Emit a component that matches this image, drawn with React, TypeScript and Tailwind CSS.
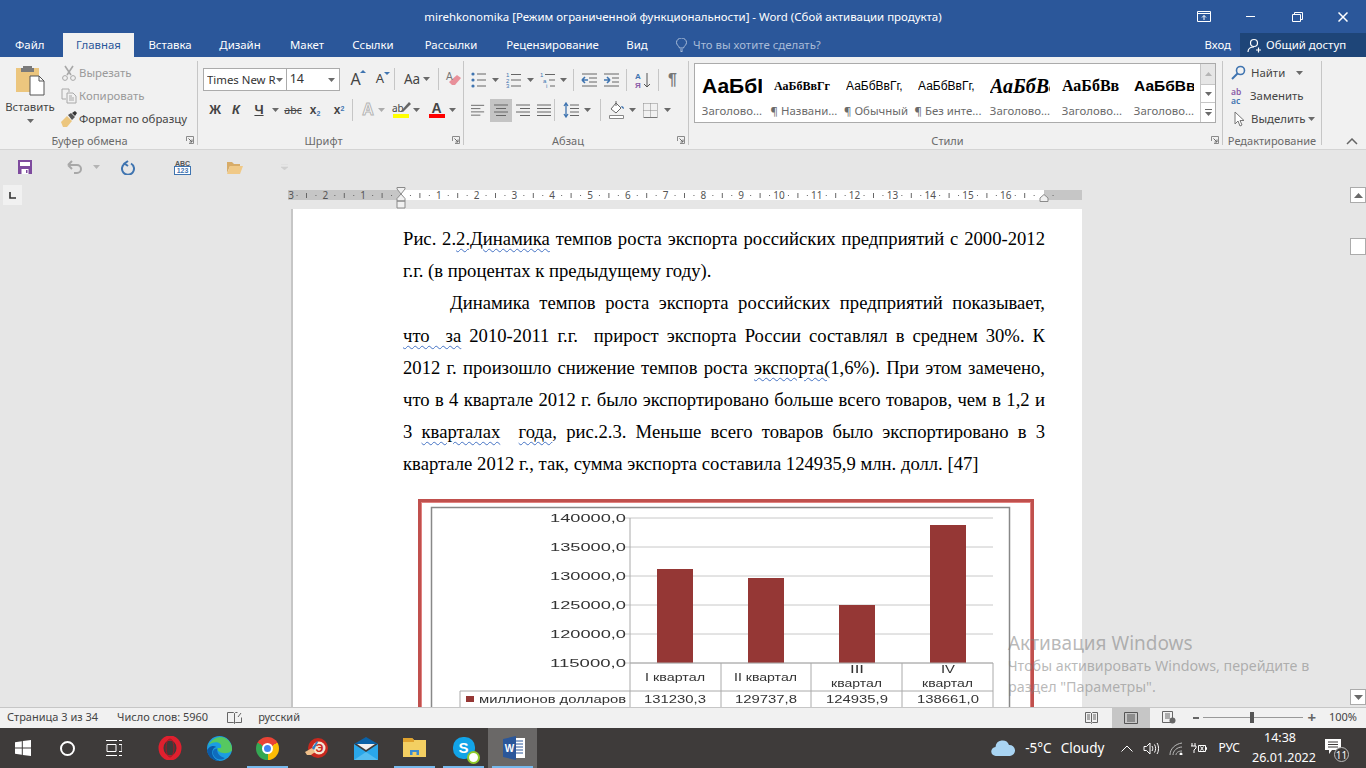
import React from "react";

const UI = "font-['Noto_Sans',sans-serif]";

function Caret({ className = "" }: { className?: string }) {
  return (
    <svg width="7" height="4" viewBox="0 0 7 4" className={`shrink-0 ${className}`}>
      <path d="M0 0h7L3.5 4z" fill="#6a6a6a" />
    </svg>
  );
}

function Launcher() {
  return (
    <svg width="8" height="8" viewBox="0 0 8 8" className="absolute bottom-[1px] right-[3px]">
      <path d="M.5 5V.5H7.5V7.5H3" fill="none" stroke="#8a8a8a" />
      <path d="M2.5 2.5L6 6M6 3.5V6H3.5" fill="none" stroke="#6a6a6a" />
    </svg>
  );
}

function Group({ w, label, pad = "", children }: { w: string; label: string; pad?: string; children: React.ReactNode }) {
  return (
    <div className={`relative flex h-[84px] shrink-0 flex-col border-r border-[#c6c6c6] ${w}`}>
      <div className="h-[72px] shrink-0">{children}</div>
      <div className={`whitespace-nowrap text-center text-[11px] leading-[16px] text-[#6a6a6a] ${pad}`}>{label}</div>
    </div>
  );
}

function Lines({ rows, stroke = "#666" }: { rows: string[]; stroke?: string }) {
  return (
    <svg width="16" height="14" viewBox="0 0 16 14">
      {rows.map((d, i) => (
        <path key={i} d={d} stroke={stroke} fill="none" />
      ))}
    </svg>
  );
}

function VSep() {
  return <div className="h-[22px] w-px shrink-0 bg-[#c6c6c6]" />;
}

function ClipboardGroup() {
  return (
    <Group w="w-[198px]" label="Буфер обмена" pad="pr-[18px]">
      <div className="flex">
        <div className="flex w-[60px] flex-col items-center pt-[4px]">
          <svg width="30" height="31" viewBox="0 0 30 31">
            <path d="M1 3h23v24H1z" fill="#ecc67e" />
            <path d="M8 3h9v-2h-9zM6 3h13v4H6z" fill="#7a7a7a" />
            <path d="M15 11h9l5 5v14H15z" fill="#fff" stroke="#555" />
            <path d="M24 11v5h5" fill="none" stroke="#555" />
          </svg>
          <div className="mt-[3px] text-[11.4px] leading-[16px] text-[#444]">Вставить</div>
          <Caret className="mt-[4px]" />
        </div>
        <div className="flex flex-col text-[11.4px] leading-[23px]">
          <div className="flex h-[23px] items-center gap-[2px] text-[#9a9a9a]">
            <svg width="16" height="16" viewBox="0 0 16 16" className="ml-px">
              <path d="M4 1l6 9M12 1L6 10" stroke="#a8a8a8" strokeWidth="1.6" fill="none" />
              <circle cx="4" cy="13" r="2.4" fill="none" stroke="#a8a8a8" />
              <circle cx="12" cy="13" r="2.4" fill="none" stroke="#a8a8a8" />
            </svg>
            Вырезать
          </div>
          <div className="flex h-[23px] items-center gap-[2px] text-[#9a9a9a]">
            <svg width="16" height="16" viewBox="0 0 16 16" className="ml-px">
              <path d="M1 1h7v3M1 1v10h4" fill="none" stroke="#a8a8a8" />
              <path d="M6 5h6l3 3v7H6z" fill="none" stroke="#a8a8a8" />
              <path d="M8 8h3M8 10h5M8 12h5" stroke="#a8a8a8" />
            </svg>
            Копировать
          </div>
          <div className="flex h-[23px] items-center gap-[2px] text-[#444]">
            <svg width="16" height="16" viewBox="0 0 16 16" className="ml-px">
              <path d="M0 11l6-6 5 5-5 6H2z" fill="#ecc67e" />
              <path d="M7 4l3-2 4 4-3 3z" fill="#555" />
              <path d="M11 2l3-2 2 2-2 3z" fill="#333" />
            </svg>
            Формат по образцу
          </div>
        </div>
      </div>
      <Launcher />
    </Group>
  );
}

function FontGroup() {
  return (
    <Group w="w-[266px]" label="Шрифт" pad="pr-[14px]">
      <div className="flex h-[36px] items-start pl-[5px] pt-[7px]">
        <div className="flex h-[23px] w-[85px] items-center justify-between border border-[#ababab] bg-white pl-[3px] pr-[3px] text-[11.4px] text-[#333]">
          <span className="overflow-hidden whitespace-nowrap">Times New R</span>
          <Caret />
        </div>
        <div className="ml-[-1px] flex h-[23px] w-[57px] items-center justify-between border border-[#ababab] bg-white pl-[3px] pr-[4px] text-[12.5px] text-[#333]">
          14
          <Caret />
        </div>
        <div className="ml-[5px] flex h-[22px] items-center text-[#444]">
          <span className="relative w-[24px] pr-[3px] text-center text-[16px]">
            A
            <svg width="6" height="3" viewBox="0 0 6 3" className="absolute right-[3px] top-[3px]">
              <path d="M0 3h6L3 0z" fill="#3f74b0" />
            </svg>
          </span>
          <span className="relative w-[22px] text-center text-[13px]">
            A
            <svg width="6" height="3" viewBox="0 0 6 3" className="absolute right-[1px] top-[3px]">
              <path d="M0 0h6L3 3z" fill="#3f74b0" />
            </svg>
          </span>
          <div className="mx-[3px]">
            <VSep />
          </div>
          <span className="flex w-[38px] items-center justify-center gap-[3px] text-[13.5px]">
            Aa
            <Caret />
          </span>
          <div className="mx-[2px]">
            <VSep />
          </div>
          <svg width="18" height="18" viewBox="0 0 18 18" className="ml-[4px]">
            <path d="M7 15l-3-3 8-7 4 3-6 7z" fill="#e8909a" />
            <text x="1" y="10" fontSize="10" fill="#777" fontFamily="Liberation Sans">A</text>
          </svg>
        </div>
      </div>
      <div className="flex h-[26px] items-center pl-[7px] text-[#444]">
        <span className="w-[20px] text-center font-['Liberation_Sans',sans-serif] text-[13px] font-bold">Ж</span>
        <span className="w-[22px] text-center font-['Liberation_Sans',sans-serif] text-[13px] font-bold italic">К</span>
        <span className="w-[24px] text-center font-['Liberation_Sans',sans-serif] text-[13px] font-bold underline">Ч</span>
        <Caret className="ml-[1px]" />
        <span className="ml-[2px] w-[24px] text-center text-[10.5px] leading-none line-through">abc</span>
        <span className="w-[20px] text-center font-['Liberation_Sans',sans-serif] text-[12px] font-bold">
          x<sub className="text-[7px] text-[#3f74b0]">2</sub>
        </span>
        <span className="ml-[3px] w-[22px] text-center font-['Liberation_Sans',sans-serif] text-[12px] font-bold">
          x<sup className="text-[7px] text-[#3f74b0]">2</sup>
        </span>
        <div className="ml-[2px] mr-[5px]">
          <VSep />
        </div>
        <span className="w-[20px] text-center font-['Liberation_Sans',sans-serif] text-[16px] font-bold text-white [-webkit-text-stroke:1px_#b5b5b5]">A</span>
        <Caret className="mr-[7px] opacity-50" />
        <span className="relative flex w-[18px] flex-col items-center">
          <span className="w-full text-[10px] leading-[12px]">ab</span>
          <svg width="11" height="11" viewBox="0 0 11 11" className="absolute right-[-1px] top-[-1px]">
            <path d="M1 10L9 1l2 2-8 8z" fill="#666" />
          </svg>
          <span className="h-[4px] w-[16px] bg-[#ffff00]" />
        </span>
        <Caret className="ml-[3px] mr-[8px]" />
        <span className="flex w-[17px] flex-col items-center">
          <span className="font-['Liberation_Sans',sans-serif] text-[14px] font-bold leading-[12px]">A</span>
          <span className="h-[4px] w-[16px] bg-[#ff0000]" />
        </span>
        <Caret className="ml-[4px]" />
      </div>
      <Launcher />
    </Group>
  );
}

function ParagraphGroup() {
  return (
    <Group w="w-[225px]" label="Абзац" pad="pr-[16px]">
      <div className="flex h-[36px] items-start pl-[7px] pt-[9px]">
        <div className="flex h-[20px] items-center">
          <svg width="16" height="16" viewBox="0 0 16 16">
            {[2, 8, 14].map((y) => (
              <g key={y}>
                <circle cx="2" cy={y} r="1.6" fill="#3f74b0" />
                <path d={`M6 ${y}h9`} stroke="#666" />
              </g>
            ))}
          </svg>
          <Caret className="ml-[5px] mr-[7px]" />
          <svg width="16" height="16" viewBox="0 0 16 16">
            <text x="0" y="5" fontSize="6" fill="#3f74b0" fontFamily="Liberation Sans">1</text>
            <text x="0" y="10.5" fontSize="6" fill="#3f74b0" fontFamily="Liberation Sans">2</text>
            <text x="0" y="16" fontSize="6" fill="#3f74b0" fontFamily="Liberation Sans">3</text>
            <path d="M5 2.5h10M5 8h10M5 14h10" stroke="#666" />
          </svg>
          <Caret className="ml-[5px] mr-[6px]" />
          <svg width="16" height="16" viewBox="0 0 16 16">
            <text x="0" y="5" fontSize="6" fill="#3f74b0" fontFamily="Liberation Sans">1</text>
            <text x="3" y="10.5" fontSize="6" fill="#3f74b0" fontFamily="Liberation Sans">a</text>
            <text x="6" y="16" fontSize="6" fill="#3f74b0" fontFamily="Liberation Sans">i</text>
            <path d="M5 2.5h10M9 8h6M10 14h5" stroke="#666" />
          </svg>
          <Caret className="ml-[4px] mr-[6px]" />
          <VSep />
          <svg width="16" height="14" viewBox="0 0 16 14" className="ml-[7px]">
            <path d="M1 7h6M1 7l3-3M1 7l3 3" stroke="#3f74b0" strokeWidth="1.6" fill="none" />
            <path d="M1 1h15M8 5h8M8 9h8M1 13h15" stroke="#666" />
          </svg>
          <svg width="16" height="14" viewBox="0 0 16 14" className="ml-[6px]">
            <path d="M1 7h6M7 7L4 4M7 7l-3 3" stroke="#3f74b0" strokeWidth="1.6" fill="none" />
            <path d="M1 1h15M9 5h7M9 9h7M1 13h15" stroke="#666" />
          </svg>
          <div className="ml-[7px]">
            <VSep />
          </div>
          <svg width="16" height="17" viewBox="0 0 16 17" className="ml-[8px]">
            <text x="0" y="7" fontSize="8" fontWeight="700" fill="#3f74b0" fontFamily="Liberation Sans">А</text>
            <text x="0" y="16" fontSize="8" fontWeight="700" fill="#8a5ca8" fontFamily="Liberation Sans">Я</text>
            <path d="M12 1v14M9 12l3 3 3-3" stroke="#555" fill="none" />
          </svg>
          <div className="ml-[7px]">
            <VSep />
          </div>
          <span className="ml-[9px] font-['Liberation_Sans',sans-serif] text-[16px] font-bold text-[#777]">¶</span>
        </div>
      </div>
      <div className="flex h-[26px] items-center pl-[7px]">
        <span className="flex h-[23px] w-[15px] items-center">
          <Lines rows={["M0 2h14", "M0 5.500h10", "M0 9h14", "M0 12.500h10"]} />
        </span>
        <span className="ml-[4px] flex h-[23px] w-[22px] items-center justify-center bg-[#c4c4c4]">
          <Lines rows={["M1 2h14", "M3 5.500h10", "M1 9h14", "M3 12.500h10"]} />
        </span>
        <span className="ml-[3px] flex h-[23px] w-[18px] items-center">
          <Lines rows={["M1 2h14", "M5 5.500h10", "M1 9h14", "M5 12.500h10"]} />
        </span>
        <span className="ml-[3px] flex h-[23px] w-[18px] items-center">
          <Lines rows={["M1 2h14", "M1 5.500h14", "M1 9h14", "M1 12.500h14"]} />
        </span>
        <VSep />
        <svg width="16" height="16" viewBox="0 0 16 16" className="ml-[8px]">
          <path d="M3 1v14M1 4l2-3 2 3M1 12l2 3 2-3" stroke="#3f74b0" fill="none" strokeWidth="1.3" />
          <path d="M7 3h9M7 6.500h9M7 10h9M7 13.500h9" stroke="#666" />
        </svg>
        <Caret className="ml-[5px] mr-[9px]" />
        <VSep />
        <svg width="16" height="18" viewBox="0 0 16 18" className="ml-[8px]">
          <path d="M2 8l5-6 5 5-5 5z" fill="#fff" stroke="#666" />
          <path d="M7 0v5" stroke="#666" />
          <path d="M12 5c2 0 3 1 3 3l-2-1z" fill="#3f74b0" />
          <path d="M.5 14.500h14v3H.5z" fill="#fff" stroke="#888" />
        </svg>
        <Caret className="ml-[4px] mr-[7px]" />
        <svg width="15" height="15" viewBox="0 0 15 15">
          <path d="M.5.500h14M.5.500v14M14.500.500v14M7.500.500v14M.5 7.500h14" fill="none" stroke="#888" strokeDasharray="1 1" />
          <path d="M.5 14.500h14" stroke="#777" />
        </svg>
        <Caret className="ml-[6px]" />
      </div>
      <Launcher />
    </Group>
  );
}

const gallery = [
  { text: "АаБбІ", label: "Заголово...", cls: "font-['Liberation_Sans',sans-serif] text-[21px] font-bold" },
  { text: "АаБбВвГг", label: "¶ Названи...", cls: "font-['Liberation_Serif',serif] text-[12px] font-bold" },
  { text: "АаБбВвГг,", label: "¶ Обычный", cls: "font-['Liberation_Sans',sans-serif] text-[12px]" },
  { text: "АаБбВвГг,", label: "¶ Без инте...", cls: "font-['Liberation_Sans',sans-serif] text-[12px]" },
  { text: "АаБбВв", label: "Заголово...", cls: "font-['Liberation_Serif',serif] text-[20px] font-bold italic" },
  { text: "АаБбВв", label: "Заголово...", cls: "font-['Liberation_Serif',serif] text-[16px] font-bold" },
  { text: "АаБбВв", label: "Заголово...", cls: "font-['Liberation_Sans',sans-serif] text-[15.5px] font-bold" },
];

function StylesGroup() {
  return (
    <Group w="w-[534px]" label="Стили" pad="pr-[16px]">
      <div className="ml-[5px] mt-[2px] flex h-[60px] w-[522px] border border-[#ababab] bg-white">
        <div className="flex w-[505px] pl-[1px]">
          {gallery.map((g, i) => (
            <div key={i} className="flex w-[72px] flex-col items-center">
              <div className={`flex h-[38px] w-[60px] items-center overflow-hidden whitespace-nowrap pt-[6px] text-black ${g.cls}`}>{g.text}</div>
              <div className="mt-[2px] whitespace-nowrap text-[11.4px] leading-[14px] text-[#6a6a6a]">{g.label}</div>
            </div>
          ))}
        </div>
        <div className="flex w-[15px] flex-col border-l border-[#c6c6c6]">
          <div className="flex h-[20px] items-center justify-center bg-[#e6e6e6]">
            <svg width="7" height="4" viewBox="0 0 7 4">
              <path d="M0 4h7L3.500 0z" fill="#b5b5b5" />
            </svg>
          </div>
          <div className="flex h-[19px] items-center justify-center border-y border-[#c6c6c6]">
            <Caret />
          </div>
          <div className="flex flex-1 flex-col items-center justify-center gap-[2px]">
            <span className="h-px w-[7px] bg-[#6a6a6a]" />
            <Caret />
          </div>
        </div>
      </div>
      <Launcher />
    </Group>
  );
}

function EditingGroup() {
  return (
    <Group w="w-[99px]" label="Редактирование">
      <div className="flex flex-col pl-[8px] text-[11.4px] text-[#444]">
        <div className="flex h-[23px] items-center">
          <svg width="15" height="15" viewBox="0 0 15 15">
            <circle cx="9.500" cy="5.500" r="4" fill="none" stroke="#3f74b0" strokeWidth="1.6" />
            <path d="M6.500 8.500L1 14" stroke="#3f74b0" strokeWidth="2" />
          </svg>
          <span className="ml-[5px]">Найти</span>
          <Caret className="ml-[11px]" />
        </div>
        <div className="flex h-[23px] items-center">
          <span className="w-[16px] text-[8.5px] font-semibold leading-[9px]">
            <span className="text-[#8a5ca8]">ab</span>
            <br />
            <span className="text-[#3f74b0]">ac</span>
          </span>
          <span className="ml-[3px] whitespace-nowrap">Заменить</span>
        </div>
        <div className="flex h-[23px] items-center">
          <svg width="12" height="16" viewBox="0 0 12 16" className="ml-[3px]">
            <path d="M1 1v12l3-3 2 5 2-1-2-4.500h4z" fill="#fff" stroke="#777" />
          </svg>
          <span className="ml-[5px]">Выделить</span>
          <Caret className="ml-[2px]" />
        </div>
      </div>
    </Group>
  );
}

function TitleBar() {
  return (
    <div className="grid h-[33px] grid-cols-[1fr_auto_1fr] items-center text-[11.45px] text-white">
      <div />
      <div className="whitespace-nowrap">mirehkonomika [Режим ограниченной функциональности] - Word (Сбой активации продукта)</div>
      <div className="flex items-center justify-end">
        <svg width="14" height="11" viewBox="0 0 14 11" className="mr-[35px]">
          <path d="M.5.500h13v10H.5zM.5 2.500h13M7 9V4.500M5 6.500l2-2 2 2" stroke="#fff" fill="none" />
        </svg>
        <span className="mr-[37px] h-px w-[9px] bg-white" />
        <svg width="11" height="10" viewBox="0 0 11 10" className="mr-[35px]">
          <path d="M.5 2.500h8v7h-8zM2.500 2.500V.5h8v7h-2" stroke="#fff" fill="none" />
        </svg>
        <svg width="10" height="10" viewBox="0 0 10 10" className="mr-[18px]">
          <path d="M.5.500l9 9M9.500.500l-9 9" stroke="#fff" strokeWidth="1.5" />
        </svg>
      </div>
    </div>
  );
}

const tabs = [
  { t: "Вставка", w: "w-[72px]" },
  { t: "Дизайн", w: "w-[68px]" },
  { t: "Макет", w: "w-[66px]" },
  { t: "Ссылки", w: "w-[66px]" },
  { t: "Рассылки", w: "w-[90px]" },
  { t: "Рецензирование", w: "w-[113px]" },
  { t: "Вид", w: "w-[56px]" },
];

function Tabs() {
  return (
    <div className="flex h-[24px] items-stretch text-[11.4px] text-white">
      <div className="flex w-[63px] items-center pl-[15px]">Файл</div>
      <div className="flex w-[71px] items-center justify-center bg-[#f1f1f1] text-[#2b579a]">Главная</div>
      {tabs.map((t) => (
        <div key={t.t} className={`flex items-center justify-center ${t.w}`}>
          {t.t}
        </div>
      ))}
      <div className="ml-[11px] flex items-center gap-[6px] text-[#a9bcd8]">
        <svg width="11" height="14" viewBox="0 0 11 14">
          <path d="M3.500 10C3 8 .5 7 .5 4.500a5 4.500 0 0 1 10 0C10.500 7 8 8 7.500 10zM4 12h3M4.500 13.500h2" fill="none" stroke="#a9bcd8" />
        </svg>
        Что вы хотите сделать?
      </div>
      <div className="ml-auto flex items-center pr-[9px]">Вход</div>
      <div className="flex w-[126px] items-center gap-[4px] bg-[#1e4578] pl-[7px]">
        <svg width="15" height="15" viewBox="0 0 15 15">
          <circle cx="7" cy="5" r="3.500" fill="none" stroke="#fff" strokeWidth="1.200" />
          <path d="M1 14c0-3 2-5 6-5M9 12h5M11.500 9.500v5" fill="none" stroke="#fff" strokeWidth="1.200" />
        </svg>
        Общий доступ
      </div>
    </div>
  );
}

function QuickAccess() {
  return (
    <div className="flex h-[34px] items-center bg-[#e6e6e6]">
      <svg width="14" height="14" viewBox="0 0 14 14" className="ml-[18px]">
        <path d="M0 0h14v14H0z" fill="#7e4b9e" />
        <path d="M2 2h10v4H2z" fill="#fff" />
        <path d="M3.500 9h7v5h-7z" fill="#fff" />
        <path d="M8 10h1.500v3H8z" fill="#7e4b9e" />
      </svg>
      <svg width="15" height="14" viewBox="0 0 15 14" className="ml-[35px]">
        <path d="M1 5h9a4 4 0 0 1 0 8H7M1 5l4-4M1 5l4 4" fill="none" stroke="#a8a8a8" strokeWidth="2" />
      </svg>
      <Caret className="ml-[11px] opacity-40" />
      <svg width="14" height="15" viewBox="0 0 14 15" className="ml-[21px]">
        <path d="M4 3.500a6 6 0 1 0 6 0M7 1l-3.500 2.500L7 6" fill="none" stroke="#3f74b0" strokeWidth="2" />
      </svg>
      <svg width="17" height="16" viewBox="0 0 17 16" className="ml-[39px]">
        <text x="8.500" y="6.500" textAnchor="middle" fontSize="7" fontWeight="700" fill="#555" fontFamily="Liberation Sans">ABC</text>
        <rect x=".5" y="7.500" width="16" height="8" fill="#fff" stroke="#3f74b0" />
        <text x="8.500" y="14" textAnchor="middle" fontSize="7" fontWeight="700" fill="#3f74b0" fontFamily="Liberation Sans">123</text>
      </svg>
      <svg width="16" height="13" viewBox="0 0 16 13" className="ml-[36px]">
        <path d="M0 1h5l2 2h6v2H3L0 12z" fill="#d8ac68" />
        <path d="M3 5h13l-3 8H0z" fill="#f0c987" />
      </svg>
      <svg width="7" height="6" viewBox="0 0 7 6" className="ml-[38px]">
        <path d="M0 0h7M0 3h7L3.500 6z" fill="#cfcfcf" stroke="#cfcfcf" strokeWidth=".5" />
      </svg>
    </div>
  );
}

function Ruler() {
  const zero = 113;
  const cm = 37.8;
  const labels: { x: number; n: number }[] = [];
  for (let n = -3; n <= 16; n++) if (n !== 0) labels.push({ x: n === -3 ? 3 : zero + n * cm, n: Math.abs(n) });
  const marks: React.ReactNode[] = [];
  for (let i = -14; i < 70; i++) {
    const x = zero + (i * cm) / 4;
    if (i % 4 === 0 || x < 8 || x > 792) continue;
    marks.push(
      i % 2 === 0 ? (
        <path key={i} d={`M${x} 3v5`} stroke="#666" />
      ) : (
        <path key={i} d={`M${x} 5v1`} stroke="#666" />
      ),
    );
  }
  return (
    <div className="relative h-[10px] w-[794px]">
      <svg width="794" height="10" viewBox="0 0 794 10" className="block">
        <rect width="794" height="10" fill="#c6c6c6" />
        <rect x="113" width="643" height="10" fill="#fff" />
        {marks}
        {labels.map((l) => (
          <text key={l.x} x={l.x} y="9" textAnchor="middle" fontSize="10" fill="#555" fontFamily="Noto Sans">
            {l.n}
          </text>
        ))}
      </svg>
      <svg width="10" height="22" viewBox="0 0 10 22" className="absolute left-[108px] top-[-3px]">
        <path d="M1 .5h8V2L5 7 1 2zM1 11.500L5 7l4 4.500V14H1zM1 14h8v7H1z" fill="#f1f1f1" stroke="#8a8a8a" />
      </svg>
      <svg width="10" height="8" viewBox="0 0 10 8" className="absolute left-[751px] top-[4px]">
        <path d="M1 7.500V4l4-3.500L9 4v3.500z" fill="#f1f1f1" stroke="#8a8a8a" />
      </svg>
    </div>
  );
}

const squiggle = "underline decoration-wavy decoration-[#4472c4] decoration-1 underline-offset-[3px]";

function Line({ children, last }: { children: React.ReactNode; last?: boolean }) {
  return <div className={`whitespace-pre-wrap ${last ? "" : "[text-align-last:justify]"}`}>{children}</div>;
}

function DocText() {
  return (
    <div className="font-['Liberation_Serif',serif] text-[18.67px] leading-[32.2px] text-black">
      <Line>
        Рис. 2.<span className={squiggle}>2.Динамика</span> темпов роста экспорта российских предприятий с 2000-2012
      </Line>
      <Line last>г.г. (в процентах к предыдущему году).</Line>
      <div className="whitespace-pre-wrap pl-[47px] [text-align-last:justify]">Динамика темпов роста экспорта российских предприятий показывает,</div>
      <Line>
        <span className={squiggle}>что  за</span> 2010-2011 г.г.  прирост экспорта России составлял в среднем 30%. К
      </Line>
      <Line>
        2012 г. произошло снижение темпов роста <span className={squiggle}>экспорта(</span>1,6%). При этом замечено,
      </Line>
      <Line>что в 4 квартале 2012 г. было экспортировано больше всего товаров, чем в 1,2 и</Line>
      <Line>
        3 <span className={squiggle}>кварталах</span>  <span className={squiggle}>года</span>, рис.2.3. Меньше всего товаров было экспортировано в 3
      </Line>
      <Line last>квартале 2012 г., так, сумма экспорта составила 124935,9 млн. долл. [47]</Line>
    </div>
  );
}

function Chart() {
  const ys = [
    { y: 19, t: "140000,0" },
    { y: 48, t: "135000,0" },
    { y: 77, t: "130000,0" },
    { y: 106, t: "125000,0" },
    { y: 135, t: "120000,0" },
    { y: 164, t: "115000,0" },
  ];
  const bars = [
    { x: 239, y: 70 },
    { x: 330, y: 79 },
    { x: 421, y: 106 },
    { x: 512, y: 26 },
  ];
  const vx = [212, 303, 393, 484, 575];
  const fill = "#333";
  const font = "Liberation Sans";
  const vals = [
    { x: 226, t: "131230,3" },
    { x: 317, t: "129737,8" },
    { x: 408, t: "124935,9" },
    { x: 499, t: "138661,0" },
  ];
  return (
    <svg width="616" height="210" viewBox="0 0 616 210" className="ml-[15px] mt-[18.4px] block blur-[0.3px]">
      <rect x="2" y="2" width="612" height="230" fill="#fff" stroke="#c0504d" strokeWidth="4" />
      <rect x="3.500" y="3.500" width="609" height="230" fill="none" stroke="#e08280" />
      <rect x="13.500" y="8.500" width="578" height="230" fill="#fff" stroke="#888" strokeWidth="1.500" />
      {ys.map((r) => (
        <g key={r.y}>
          <path d={`M207 ${r.y}H575`} stroke="#c8c8c8" />
          <text x="132" y={r.y + 4} fontSize="11" fill={fill} fontFamily={font} textLength="76" lengthAdjust="spacingAndGlyphs">
            {r.t}
          </text>
        </g>
      ))}
      {bars.map((b) => (
        <rect key={b.x} x={b.x} y={b.y} width="36" height={164 - b.y} fill="#953735" />
      ))}
      <path d="M212 19V164" stroke="#aaa" />
      {vx.map((x) => (
        <path key={x} d={`M${x} 164V210`} stroke="#aaa" />
      ))}
      <path d="M212 164H575M42 192H575M42 192V210" fill="none" stroke="#aaa" />
      <text x="227" y="182" fontSize="10" fill={fill} fontFamily={font} textLength="60" lengthAdjust="spacingAndGlyphs">I квартал</text>
      <text x="316" y="182" fontSize="10" fill={fill} fontFamily={font} textLength="63" lengthAdjust="spacingAndGlyphs">II квартал</text>
      <text x="432" y="174" fontSize="10" fill={fill} fontFamily={font} textLength="14" lengthAdjust="spacingAndGlyphs">III</text>
      <text x="413" y="188" fontSize="10" fill={fill} fontFamily={font} textLength="51" lengthAdjust="spacingAndGlyphs">квартал</text>
      <text x="523" y="174" fontSize="10" fill={fill} fontFamily={font} textLength="14" lengthAdjust="spacingAndGlyphs">IV</text>
      <text x="504" y="188" fontSize="10" fill={fill} fontFamily={font} textLength="51" lengthAdjust="spacingAndGlyphs">квартал</text>
      <rect x="48" y="197" width="8" height="6" fill="#953735" />
      <text x="61" y="204" fontSize="10.500" fill={fill} fontFamily={font} textLength="147" lengthAdjust="spacingAndGlyphs">миллионов долларов</text>
      {vals.map((v) => (
        <text key={v.x} x={v.x} y="204" fontSize="11" fill={fill} fontFamily={font} textLength="62" lengthAdjust="spacingAndGlyphs">
          {v.t}
        </text>
      ))}
    </svg>
  );
}

function Scrollbar() {
  return (
    <div className="relative mb-[2px] mt-[3px] flex w-[16px] flex-col bg-[#e6e6e6]">
      <div className="flex h-[16px] items-center justify-center border border-[#ababab] bg-white">
        <svg width="9" height="5" viewBox="0 0 9 5">
          <path d="M0 5h9L4.500 0z" fill="#6a6a6a" />
        </svg>
      </div>
      <div className="mt-[35px] h-[17px] w-[16px] border border-[#ababab] bg-white" />
      <div className="mt-auto flex h-[16px] items-center justify-center border border-[#ababab] bg-white">
        <svg width="9" height="5" viewBox="0 0 9 5">
          <path d="M0 0h9L4.500 5z" fill="#6a6a6a" />
        </svg>
      </div>
    </div>
  );
}

function Workspace() {
  return (
    <div className="flex h-[523px] overflow-hidden bg-[#e6e6e6]">
      <div className="w-[288px] shrink-0 pl-[3px] pt-[1px]">
        <div className="flex h-[20px] w-[19px] items-center justify-center bg-[#f1f1f1]">
          <svg width="7" height="7" viewBox="0 0 7 7">
            <path d="M1 0v6h6" fill="none" stroke="#333" strokeWidth="1.600" />
          </svg>
        </div>
      </div>
      <div className="w-[794px] shrink-0 pt-[6px]">
        <Ruler />
        <div className="ml-[3px] mt-[9px] h-[600px] w-[791px] border-l-2 border-[#c6c6c6] bg-white pl-[110px] pt-[14px]">
          <div className="w-[642px]">
            <DocText />
            <Chart />
          </div>
        </div>
      </div>
      <div className="flex flex-1 justify-end">
        <Scrollbar />
      </div>
    </div>
  );
}

function StatusBar() {
  return (
    <div className="flex h-[21px] items-center border-t border-[#c6c6c6] bg-[#f1f1f1] pb-[1px] pl-[7px] text-[11px] text-[#444]">
      <span>Страница 3 из 34</span>
      <span className="ml-[19px]">Число слов: 5960</span>
      <svg width="15" height="14" viewBox="0 0 15 14" className="ml-[19px]">
        <path d="M.5 1.500h6l1 1 1-1h2M.5 1.500v10h6l1 1 1-1h6v-5M7.500 2.500v10M11 6l3-4" fill="none" stroke="#666" />
      </svg>
      <span className="ml-[16px]">русский</span>
      <div className="ml-auto flex h-full items-center">
        <svg width="13" height="12" viewBox="0 0 13 12">
          <path d="M.5.500h5l1 1 1-1h5v10h-5l-1 1-1-1h-5zM6.500 1.500v9M2 3h3M2 5h3M2 7h3M8 3h3M8 5h3M8 7h3" fill="none" stroke="#666" />
        </svg>
        <div className="ml-[14px] flex h-[20px] w-[38px] items-center justify-center bg-[#c6c6c6]">
          <svg width="14" height="12" viewBox="0 0 14 12">
            <path d="M.5.500h13v11H.5zM3 3h8M3 5h8M3 7h8M3 9h8" fill="none" stroke="#555" />
          </svg>
        </div>
        <svg width="14" height="13" viewBox="0 0 14 13" className="ml-[12px]">
          <path d="M.5.500h10v11H.5zM3 3h5M3 5h5M3 7h5" fill="none" stroke="#666" />
          <circle cx="10.500" cy="9.500" r="3" fill="#666" />
        </svg>
        <span className="ml-[17px] h-[2px] w-[6px] bg-[#666]" />
        <div className="relative ml-[4px] flex h-full w-[100px] items-center">
          <span className="h-px w-full bg-[#999]" />
          <span className="absolute left-[47px] top-[4px] h-[11px] w-[4px] bg-[#555]" />
        </div>
        <span className="ml-[4px] text-[15px] font-bold leading-none text-[#666]">+</span>
        <span className="ml-[13px] mr-[9px]">100%</span>
      </div>
    </div>
  );
}

function TaskIcon({ active, run, children }: { active?: boolean; run?: boolean; children: React.ReactNode }) {
  return (
    <div className={`relative flex h-[40px] w-[49px] items-center justify-center ${active ? "bg-[#6a6867]" : ""}`}>
      {children}
      {(active || run) && <span className="absolute bottom-0 left-[4px] right-[4px] h-[2px] bg-[#76b9ed]" />}
    </div>
  );
}

function Taskbar() {
  return (
    <div className="flex h-[40px] items-center bg-[#3e3b3a] text-white">
      <div className="flex h-full w-[45px] items-center justify-center">
        <svg width="16" height="16" viewBox="0 0 16 16">
          <path d="M0 2.200l6.800-1V7.500H0zM7.800 1l8.200-1v7.500H7.800zM0 8.500h6.800v6.300l-6.800-1zM7.800 8.500H16V16l-8.200-1.100z" fill="#fff" />
        </svg>
      </div>
      <div className="flex h-full w-[45px] items-center justify-center">
        <span className="h-[15px] w-[15px] rounded-full border-[2px] border-white" />
      </div>
      <div className="flex h-full w-[47px] items-center justify-center">
        <svg width="16" height="16" viewBox="0 0 16 16">
          <path d="M0 .5h11M0 15.500h11M1 4.500h9v7H1zM13 .5h3M13 15.500h3M13 4.500h3v7h-3" stroke="#fff" fill="none" />
        </svg>
      </div>
      <div className="w-[8px]" />
      <div className="flex">
        <TaskIcon>
          <svg width="24" height="24" viewBox="0 0 24 24">
            <ellipse cx="12" cy="12" rx="9" ry="10" fill="none" stroke="#e0202e" strokeWidth="5" />
            <ellipse cx="12" cy="12" rx="4" ry="9" fill="none" stroke="#a81522" strokeWidth="1" />
          </svg>
        </TaskIcon>
        <TaskIcon>
          <svg width="25" height="25" viewBox="0 0 24 24" className="ml-[2px]">
            <circle cx="12" cy="12" r="12" fill="#1b9de2" />
            <path d="M24 14c.5-7-4-12.500-11-13C8 1 3 5 1.500 9c3-3 8-4 11-1.500 1.500 1.500 1.500 3 .5 4H10c-.5 3 3 5 7 5 3 0 6-1 7-2.500z" fill="#56c860" />
            <path d="M9 10.500c-3 .5-5 4-3.500 8C7 22 11 24 13 24c-6 .5-12-3-13-10 1-3 5-6 9-3.500z" fill="#0c59a4" />
            <path d="M10 12c-1 4 2 8 7 9-2 2-8 3-11-3-1-3 0-6 4-6z" fill="#0f6cbd" />
          </svg>
        </TaskIcon>
        <TaskIcon run>
          <span className="relative h-[23px] w-[23px] rounded-full bg-[conic-gradient(from_300deg,#ea4335_0deg_120deg,#fbbc05_120deg_240deg,#34a853_240deg_360deg)]">
            <span className="absolute left-[6px] top-[6px] h-[11px] w-[11px] rounded-full border-[2px] border-white bg-[#4285f4]" />
          </span>
        </TaskIcon>
        <TaskIcon>
          <svg width="24" height="22" viewBox="0 0 24 22">
            <circle cx="13" cy="11" r="10" fill="#c8281e" />
            <circle cx="14" cy="11" r="6.500" fill="#f6e6d0" />
            <text x="14.500" y="15" textAnchor="middle" fontSize="11" fontWeight="700" fill="#c8281e" fontFamily="Liberation Sans">Э</text>
            <path d="M0 15l7-4 3 4-4 3H2z" fill="#f0c08a" />
            <path d="M7 11l5-7 1 1-4 8z" fill="#2f7fc4" />
          </svg>
        </TaskIcon>
        <TaskIcon>
          <svg width="24" height="23" viewBox="0 0 24 23">
            <path d="M0 7L12 0l12 7z" fill="#0a62a8" />
            <path d="M3 7h18l-9 6z" fill="#f1f1f1" />
            <path d="M0 7l12 8 12-8v16H0z" fill="#2aa7ea" />
            <path d="M0 23l12-8 12 8z" fill="#55bdf0" />
          </svg>
        </TaskIcon>
        <TaskIcon run>
          <svg width="23" height="22" viewBox="0 0 23 22">
            <path d="M0 1h9l2 2h12v17H0z" fill="#f3cf62" />
            <path d="M0 1h9l2 2v2H0z" fill="#e0a32e" />
            <path d="M7 13h9v5H7z" fill="#3c8cd0" />
            <path d="M9.500 15h4v5h-4z" fill="#f3cf62" />
          </svg>
        </TaskIcon>
        <TaskIcon run>
          <span className="relative flex h-[22px] w-[22px] items-center justify-center rounded-[10px] bg-[#12a4e8] font-['Liberation_Sans',sans-serif] text-[15px] font-bold text-white">
            S
            <span className="absolute bottom-[-5px] right-[-5px] h-[13px] w-[13px] rounded-full border-[2px] border-[#8fca2c] bg-white" />
          </span>
        </TaskIcon>
        <TaskIcon active>
          <svg width="23" height="24" viewBox="0 0 23 24" className="ml-[3px]">
            <path d="M6 2h16v20H6z" fill="#fff" />
            <path d="M13 5h7M13 8h7M13 11h7M13 14h7M13 17h7" stroke="#2b579a" />
            <path d="M0 3l13-3v24L0 21z" fill="#2b579a" />
            <text x="6.500" y="15.500" textAnchor="middle" fontSize="10" fontWeight="700" fill="#fff" fontFamily="Liberation Sans">W</text>
          </svg>
        </TaskIcon>
      </div>
      <div className="ml-auto flex h-full items-center text-[13.500px]">
        <svg width="24" height="17" viewBox="0 0 24 17">
          <path d="M5 16a4.500 4.500 0 0 1-.5-9A7 7 0 0 1 18 5a5.500 5.500 0 0 1 1 11z" fill="#a9d4f2" />
        </svg>
        <span className="ml-[10px]">-5°C</span>
        <span className="ml-[9px]">Cloudy</span>
        <svg width="12" height="7" viewBox="0 0 12 7" className="ml-[17px]">
          <path d="M.5 6.500L6 1l5.500 5.500" stroke="#fff" fill="none" />
        </svg>
        <svg width="16" height="13" viewBox="0 0 16 13" className="ml-[10px]">
          <path d="M1 4.500h2.500L7 1v11L3.500 8.500H1zM9 4c1 1.500 1 3.500 0 5M11.500 2.500c1.500 2.500 1.500 5.500 0 8M14 1c2 3 2 8 0 11" fill="none" stroke="#fff" />
        </svg>
        <svg width="14" height="13" viewBox="0 0 14 13" className="ml-[10px]">
          <path d="M1 13C1 7 6 2 13 1M4 13c0-4 4-8 9-8M7 13c0-2 2-4 6-4" fill="none" stroke="#bbb" />
          <circle cx="12" cy="12" r="1.500" fill="#fff" />
        </svg>
        <svg width="17" height="11" viewBox="0 0 17 11" className="ml-[7px]">
          <path d="M2 0v3M5 0v3M1 3h5v2l-2 2v3M8.500 2.500h7v6h-7zM15.500 4.500h1v2h-1M10.500 3.500l3 4M13.500 3.500l-3 4" fill="none" stroke="#fff" />
        </svg>
        <span className="ml-[11px] text-[12px]">РУС</span>
        <div className="ml-[12px] w-[56px] text-center text-[12.5px] leading-[20px]">
          <div>14:38</div>
          <div>26.01.2022</div>
        </div>
        <div className="relative ml-[17px] mr-[17px] h-[24px] w-[24px]">
          <svg width="16" height="15" viewBox="0 0 16 15" className="absolute left-0 top-[3px]">
            <path d="M0 0h16v11H7l-3 4v-4H0z" fill="#fff" />
            <path d="M3 3h10M3 5.500h10M3 8h10" stroke="#3e3b3a" />
          </svg>
          <span className="absolute bottom-[-2px] right-0 flex h-[15px] w-[15px] items-center justify-center rounded-full border border-[#bbb] bg-[#3e3b3a] text-[10px] leading-none">11</span>
        </div>
      </div>
    </div>
  );
}

export default function App() {
  return (
    <div className={`relative flex h-[768px] w-[1366px] flex-col overflow-hidden ${UI}`}>
      <div className="bg-[#2b579a]">
        <TitleBar />
        <Tabs />
      </div>
      <div className="relative flex h-[93px] items-start border-b border-[#d4d4d4] bg-[#f1f1f1] pt-[4px]">
        <ClipboardGroup />
        <FontGroup />
        <ParagraphGroup />
        <StylesGroup />
        <EditingGroup />
        <svg width="12" height="7" viewBox="0 0 12 7" className="absolute right-[8px] top-[81px]">
          <path d="M1 6l5-5 5 5" stroke="#666" strokeWidth="1.500" fill="none" />
        </svg>
      </div>
      <QuickAccess />
      <Workspace />
      <StatusBar />
      <Taskbar />
      <div className="pointer-events-none absolute left-[1008px] top-[631px] w-[330px] text-[rgba(125,125,125,0.55)]">
        <div className="text-[19px] leading-[24px]">Активация Windows</div>
        <div className="mt-[1px] text-[14.3px] leading-[20.5px]">
          Чтобы активировать Windows, перейдите в
          <br />
          раздел "Параметры".
        </div>
      </div>
    </div>
  );
}
